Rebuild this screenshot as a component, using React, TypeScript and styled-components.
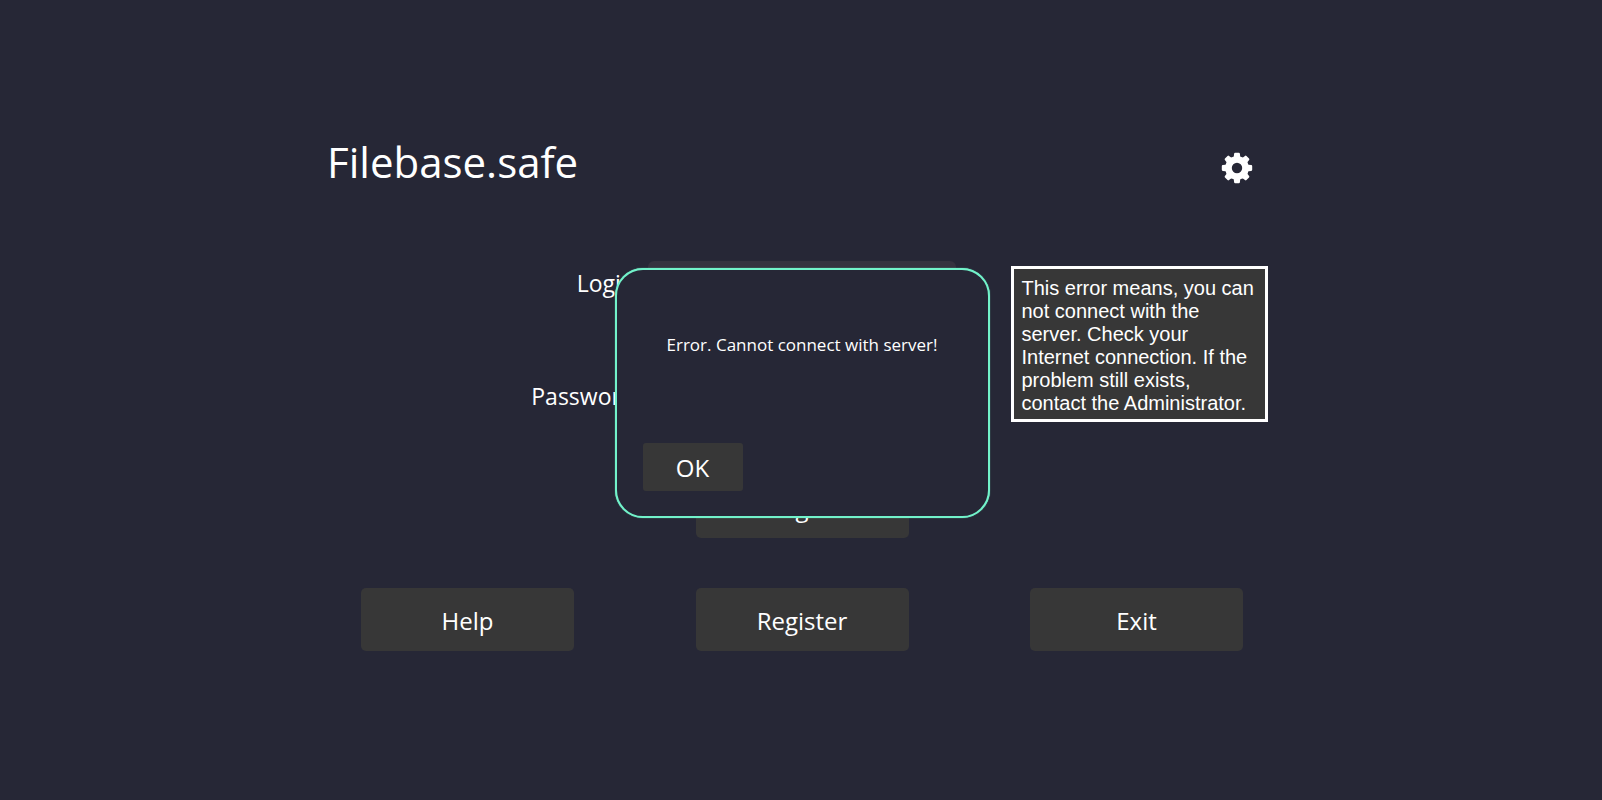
import React from "react";
import styled, { createGlobalStyle } from "styled-components";

const GlobalStyle = createGlobalStyle`
  *, *::before, *::after { box-sizing: border-box; }
  body {
    margin: 0;
    background: #262736;
    color: #fff;
    font-family: "Segoe UI", "Open Sans", sans-serif;
  }
  button, input { font: inherit; color: inherit; }
`;

const Screen = styled.div`
  position: relative;
  min-height: 100vh;
  padding: 128px 24px 40px 26px;
`;

const Main = styled.main`
  width: 100%;
  max-width: 950px;
  margin: 0 auto;
`;

const Header = styled.header`
  display: flex;
  align-items: center;
  justify-content: space-between;
  padding-right: 24px;
`;

const Title = styled.h1`
  margin: 0;
  font-size: 42px;
  line-height: 68px;
  font-weight: 400;
`;

const IconButton = styled.button`
  display: flex;
  margin-top: 12px;
  padding: 0;
  border: 0;
  background: none;
  cursor: pointer;
`;

const Form = styled.form`
  display: flex;
  flex-direction: column;
  align-items: center;
  margin-top: 65px;
`;

const Field = styled.div`
  display: grid;
  grid-template-columns: 1fr 308px 1fr;
  width: 100%;
  height: 44px;
  margin-bottom: 69px;
`;

const Label = styled.label`
  padding-right: 7px;
  text-align: right;
  font-size: 23px;
  line-height: 44px;
`;

const TextInput = styled.input`
  width: 100%;
  min-width: 0;
  padding: 0 12px;
  border: 0;
  border-radius: 6px;
  background: #35323f;
  font-size: 23px;
`;

const Button = styled.button<{ $compact?: boolean }>`
  width: ${(p) => (p.$compact ? "100px" : "213px")};
  height: ${(p) => (p.$compact ? "48px" : "63px")};
  padding: 2px 0 0;
  border: 0;
  border-radius: ${(p) => (p.$compact ? "3px" : "5px")};
  background: #373737;
  font-size: 24px;
  line-height: 32px;
  cursor: pointer;
`;

const SubmitRow = styled.div`
  margin-top: -12px;
`;

const Actions = styled.nav`
  display: flex;
  justify-content: space-between;
  margin-top: 50px;
  padding: 0 34px;
`;

const Overlay = styled.div`
  position: absolute;
  inset: 0;
  display: grid;
  grid-template-columns: 1fr 375px 1fr;
  align-items: start;
  padding: 266px 0 0 2px;
`;

const Dialog = styled.section`
  grid-column: 2;
  display: flex;
  flex-direction: column;
  justify-content: space-between;
  height: 250px;
  margin-top: 2px;
  padding: 63px 26px 25px;
  border: 2px solid #72f2ca;
  border-radius: 28px;
  background: #262736;
  box-shadow: 0 0 1px #72f2ca;
`;

const Message = styled.p`
  margin: 0;
  text-align: center;
  font-size: 17px;
  line-height: 24px;
`;

const Tooltip = styled.aside`
  width: 257px;
  margin-left: 21px;
  padding: 8px 8px 4px;
  border: 3px solid #fff;
  background: #373737;
  font-family: Arial, "Liberation Sans", sans-serif;
  font-size: 20px;
  line-height: 23px;
`;

const teeth = [0, 45, 90, 135, 180, 225, 270, 315];

function Gear() {
  return (
    <svg width="32" height="32" viewBox="-16 -16 32 32" aria-hidden="true">
      <g fill="#fff">
        {teeth.map((angle) => (
          <path
            key={angle}
            transform={`rotate(${angle})`}
            d="M-5 -9 L-3.2 -11.5 L-2.9 -14.2 Q-2.8 -15.2 -1.8 -15.2 H1.8 Q2.8 -15.2 2.9 -14.2 L3.2 -11.5 L5 -9 Z"
          />
        ))}
      </g>
      <circle r="8.5" fill="none" stroke="#fff" strokeWidth="6.6" />
    </svg>
  );
}

export default function App() {
  return (
    <>
      <GlobalStyle />
      <Screen>
        <Main>
          <Header>
            <Title>Filebase.safe</Title>
            <IconButton type="button" aria-label="Settings">
              <Gear />
            </IconButton>
          </Header>
          <Form onSubmit={(e) => e.preventDefault()}>
            <Field>
              <Label htmlFor="login">Login:</Label>
              <TextInput id="login" type="text" />
            </Field>
            <Field>
              <Label htmlFor="password">Password:</Label>
              <TextInput id="password" type="password" />
            </Field>
            <SubmitRow>
              <Button type="submit">Log in</Button>
            </SubmitRow>
          </Form>
          <Actions>
            <Button type="button">Help</Button>
            <Button type="button">Register</Button>
            <Button type="button">Exit</Button>
          </Actions>
        </Main>
        <Overlay>
          <Dialog role="alertdialog" aria-labelledby="error-message" aria-describedby="error-hint">
            <Message id="error-message">Error. Cannot connect with server!</Message>
            <Button type="button" $compact>OK</Button>
          </Dialog>
          <Tooltip role="tooltip" id="error-hint">
            This error means, you can not connect with the server. Check your Internet
            connection. If the problem still exists, contact the Administrator.
          </Tooltip>
        </Overlay>
      </Screen>
    </>
  );
}
